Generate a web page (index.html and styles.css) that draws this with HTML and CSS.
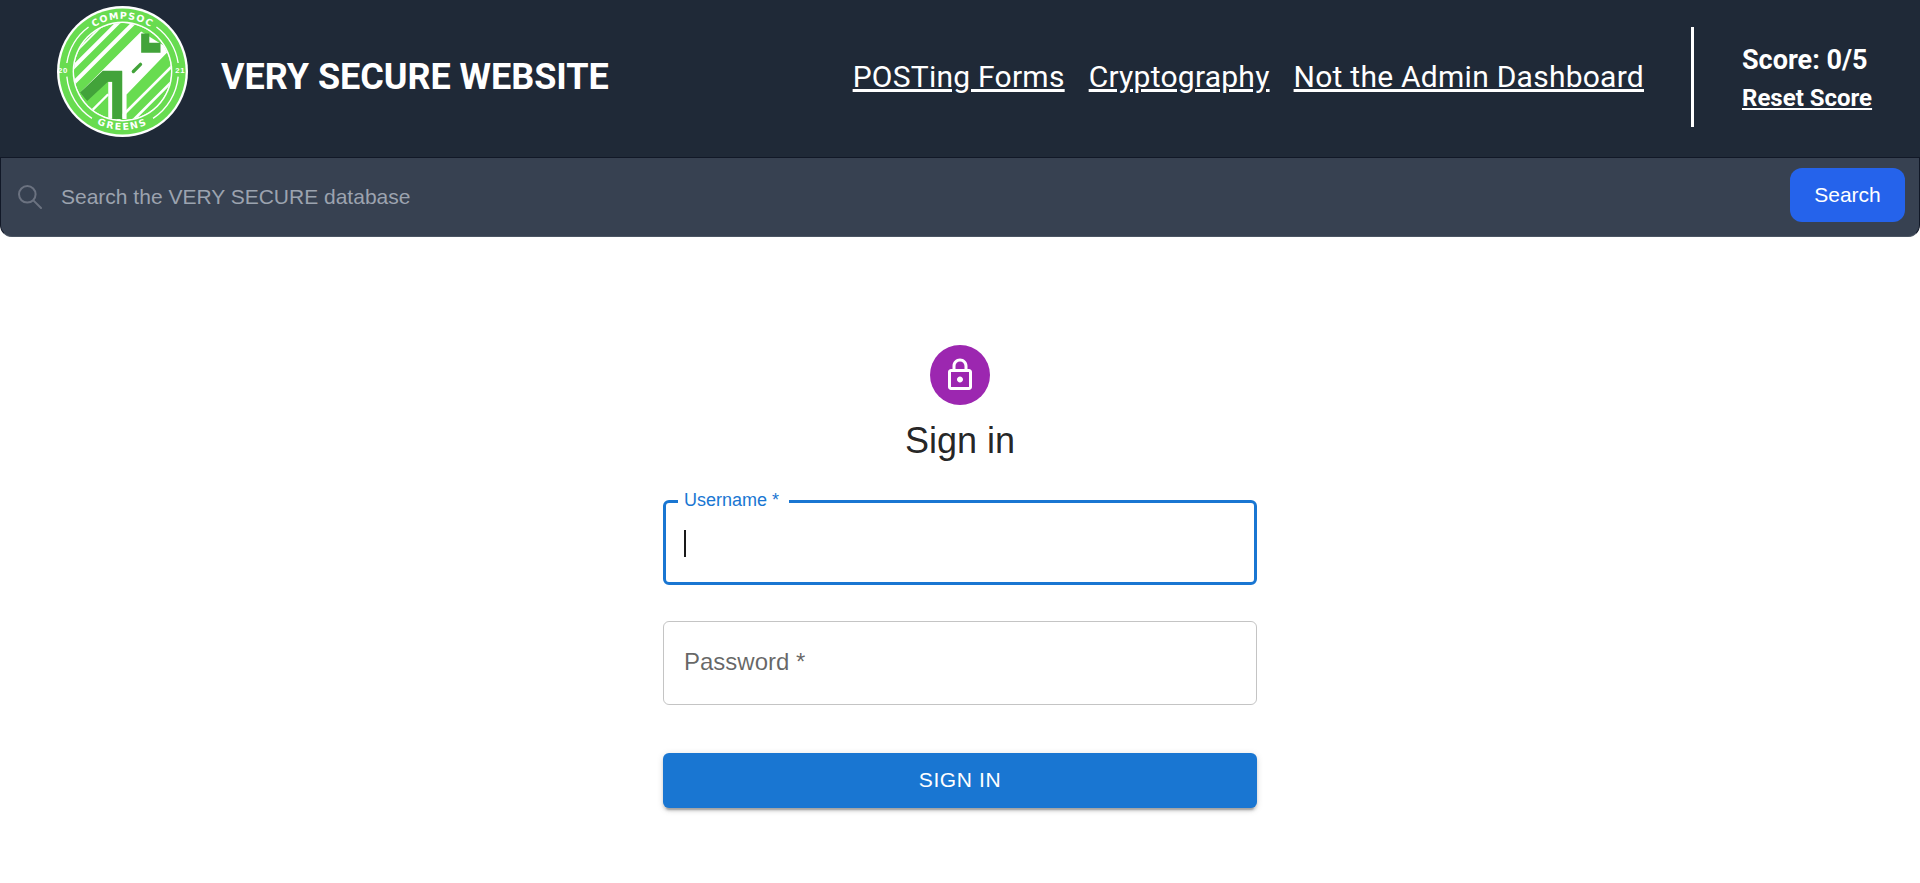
FILE: index.html
```html
<!DOCTYPE html>
<html lang="en">
<head>
<meta charset="utf-8">
<title>Very Secure Website</title>
<link rel="stylesheet" href="styles.css">
</head>
<body>
<header class="top">
  <div class="brand">
    <svg class="logo" viewBox="87 22 386 386" aria-label="CompSoc Greens 2021">
      <defs>
        <clipPath id="disc"><circle cx="280" cy="215" r="143"/></clipPath>
        <path id="arcTop" d="M125 215A155 155 0 0 1 435 215"/>
        <path id="arcBottom" d="M108 215A172 172 0 0 0 452 215"/>
      </defs>
      <circle cx="280" cy="215" r="193" fill="#fff"/>
      <circle cx="280" cy="215" r="186" fill="#68dc50"/>
      <g fill="none" stroke="#fff" stroke-width="4">
        <path d="M180 84A165 165 0 0 0 116 190"/>
        <path d="M116 230A165 165 0 0 0 190 353"/>
        <path d="M370 353A165 165 0 0 0 444 230"/>
        <path d="M444 190A165 165 0 0 0 380 84"/>
      </g>
      <circle cx="280" cy="215" r="147" fill="#fff"/>
      <g clip-path="url(#disc)">
        <circle cx="280" cy="215" r="143" fill="#68dc50"/>
        <g fill="none" stroke="#fff">
          <path d="M0 300L300 0" stroke-width="5"/>
          <path d="M0 338L338 0" stroke-width="12"/>
          <path d="M0 385L385 0" stroke-width="12"/>
          <path d="M0 625L625 0" stroke-width="8"/>
          <path d="M0 670L670 0" stroke-width="8"/>
          <path d="M0 715L715 0" stroke-width="8"/>
        </g>
        <path d="M155 277L335 97L420 150L292 283V355H279V215H235Z" fill="#fff"/>
        <path d="M192 328L238 282" fill="none" stroke="#fff" stroke-width="7"/>
        <path d="M238 245H250V360H238Z" fill="#fff"/>
      </g>
      <path d="M155 277L222 213H279V355H250V245H237L176 302Z" fill="#42a33a"/>
      <path d="M335 103H359V130H392V160H335Z" fill="#42a33a"/>
      <path d="M312 215L333 194" fill="none" stroke="#42a33a" stroke-width="10" stroke-linecap="round"/>
      <text class="logo-text"><textPath href="#arcTop" startOffset="50%">COMPSOC</textPath></text>
      <text class="logo-text logo-text-wide"><textPath href="#arcBottom" startOffset="50%">GREENS</textPath></text>
      <text class="logo-year" x="105" y="218">20</text>
      <text class="logo-year" x="450" y="218">21</text>
    </svg>
    <span class="title">VERY SECURE WEBSITE</span>
  </div>
  <nav class="links">
    <a href="#">POSTing Forms</a>
    <a href="#">Cryptography</a>
    <a href="#">Not the Admin Dashboard</a>
  </nav>
  <div class="score">
    <div class="score-value">Score: 0/5</div>
    <a class="score-reset" href="#">Reset Score</a>
  </div>
</header>

<form class="search">
  <svg class="search-icon" viewBox="0 0 24 24" fill="none" stroke="#6b7280" stroke-width="2" stroke-linecap="round">
    <circle cx="9.3" cy="9.3" r="8.3"/>
    <path d="M15.6 15.6L23 23"/>
  </svg>
  <input class="search-input" type="text" placeholder="Search the VERY SECURE database">
  <button class="search-button" type="button">Search</button>
</form>

<main class="signin">
  <div class="avatar">
    <svg viewBox="0 0 24 24" fill="#fff"><path d="M18 8h-1V6c0-2.76-2.24-5-5-5S7 3.24 7 6v2H6c-1.1 0-2 .9-2 2v10c0 1.1.9 2 2 2h12c1.1 0 2-.9 2-2V10c0-1.1-.9-2-2-2zM9 6c0-1.66 1.34-3 3-3s3 1.34 3 3v2H9V6zm9 14H6V10h12v10zm-6-3c1.1 0 2-.9 2-2s-.9-2-2-2-2 .9-2 2 .9 2 2 2z"/></svg>
  </div>
  <h1 class="heading">Sign in</h1>
  <form class="form">
    <div class="field field-focused">
      <label class="field-label-float">Username *</label>
      <span class="caret"></span>
    </div>
    <div class="field">
      <label class="field-label">Password *</label>
    </div>
    <button class="submit" type="button">SIGN IN</button>
  </form>
</main>
</body>
</html>
```

FILE: styles.css
```css
* { box-sizing: border-box; }

html, body {
  margin: 0;
  height: 100%;
  overflow: hidden;
  background: #fff;
  font-family: "Liberation Sans", Arial, sans-serif;
}

.top {
  display: flex;
  align-items: center;
  height: 157px;
  padding-bottom: 4px;
  background: #1f2937;
  color: #fff;
  font-family: Roboto, sans-serif;
}

.brand {
  display: flex;
  align-items: center;
  margin-left: 57px;
}

.logo {
  width: 131px;
  height: 131px;
  flex: none;
  margin-top: -10px;
}

.logo-text {
  font: 700 28px "DejaVu Sans", sans-serif;
  letter-spacing: 3px;
  fill: #fff;
  text-anchor: middle;
}

.logo-text-wide {
  letter-spacing: 5px;
}

.logo-year {
  font: 700 23px "Liberation Sans", sans-serif;
  letter-spacing: 2px;
  fill: #fff;
  text-anchor: middle;
}

.title {
  margin-left: 33px;
  font-size: 36px;
  font-weight: 700;
  letter-spacing: -0.05px;
}

.links {
  display: flex;
  gap: 24px;
  margin-left: auto;
  font-size: 30px;
  letter-spacing: 0.25px;
}

.links a,
.score-reset {
  color: #fff;
  text-decoration: underline;
}

.score {
  align-self: flex-start;
  width: 229px;
  height: 100px;
  margin: 27px 0 0 47px;
  padding: 15px 0 0 48px;
  border-left: 3px solid #fff;
}

.score-value {
  font-size: 27px;
  font-weight: 700;
  line-height: 36px;
}

.score-reset {
  display: block;
  margin-top: 2px;
  font-size: 24px;
  font-weight: 700;
  line-height: 36px;
}

.search {
  display: flex;
  align-items: center;
  height: 80px;
  padding: 0 14px 4px 17px;
  background: #374151;
  border: 1px solid #111827;
  border-bottom-color: #4b5563;
  border-radius: 0 0 12px 12px;
}

.search-icon {
  width: 24px;
  height: 24px;
  flex: none;
  margin-top: 4px;
}

.search-input {
  flex: 1;
  min-width: 0;
  margin: 4px 0 0 19px;
  padding: 0;
  border: 0;
  outline: 0;
  background: transparent;
  color: #fff;
  font: 21px "Liberation Sans", sans-serif;
}

.search-input::placeholder {
  color: #9ca3af;
  opacity: 1;
}

.search-button {
  width: 115px;
  height: 54px;
  padding: 0;
  border: 0;
  border-radius: 12px;
  background: #2563eb;
  color: #fff;
  font: 21px "Liberation Sans", sans-serif;
}

.signin {
  display: flex;
  flex-direction: column;
  align-items: center;
  padding-top: 108px;
}

.avatar {
  display: flex;
  align-items: center;
  justify-content: center;
  width: 60px;
  height: 60px;
  border-radius: 50%;
  background: #9c27b0;
}

.avatar svg {
  width: 36px;
  height: 36px;
}

.heading {
  margin: 12px 0 0;
  color: rgba(0, 0, 0, 0.87);
  font-size: 36px;
  font-weight: 400;
  line-height: 48px;
}

.form {
  display: flex;
  flex-direction: column;
  gap: 36px;
  width: 594px;
  margin-top: 35px;
}

.field {
  position: relative;
  height: 84px;
  border: 1.5px solid rgba(0, 0, 0, 0.23);
  border-radius: 6px;
}

.field-focused {
  height: 85px;
  border: 3px solid #1976d2;
}

.field-label {
  position: absolute;
  left: 20px;
  top: 26px;
  color: rgba(0, 0, 0, 0.6);
  font-size: 24px;
  line-height: 28px;
}

.field-label-float {
  position: absolute;
  left: 12px;
  top: -13px;
  padding: 0 10px 0 6px;
  background: #fff;
  color: #1976d2;
  font-size: 18px;
  line-height: 21px;
}

.caret {
  position: absolute;
  left: 18px;
  top: 27px;
  width: 2px;
  height: 27px;
  background: #1a1a1a;
}

.submit {
  height: 55px;
  margin-top: 12px;
  padding: 0 0 2px;
  border: 0;
  border-radius: 6px;
  background: #1976d2;
  color: #fff;
  font: 21px "Liberation Sans", sans-serif;
  letter-spacing: 0.6px;
  box-shadow: 0 4.5px 1.5px -3px rgba(0, 0, 0, 0.2), 0 3px 3px 0 rgba(0, 0, 0, 0.14), 0 1.5px 7.5px 0 rgba(0, 0, 0, 0.12);
}
```
